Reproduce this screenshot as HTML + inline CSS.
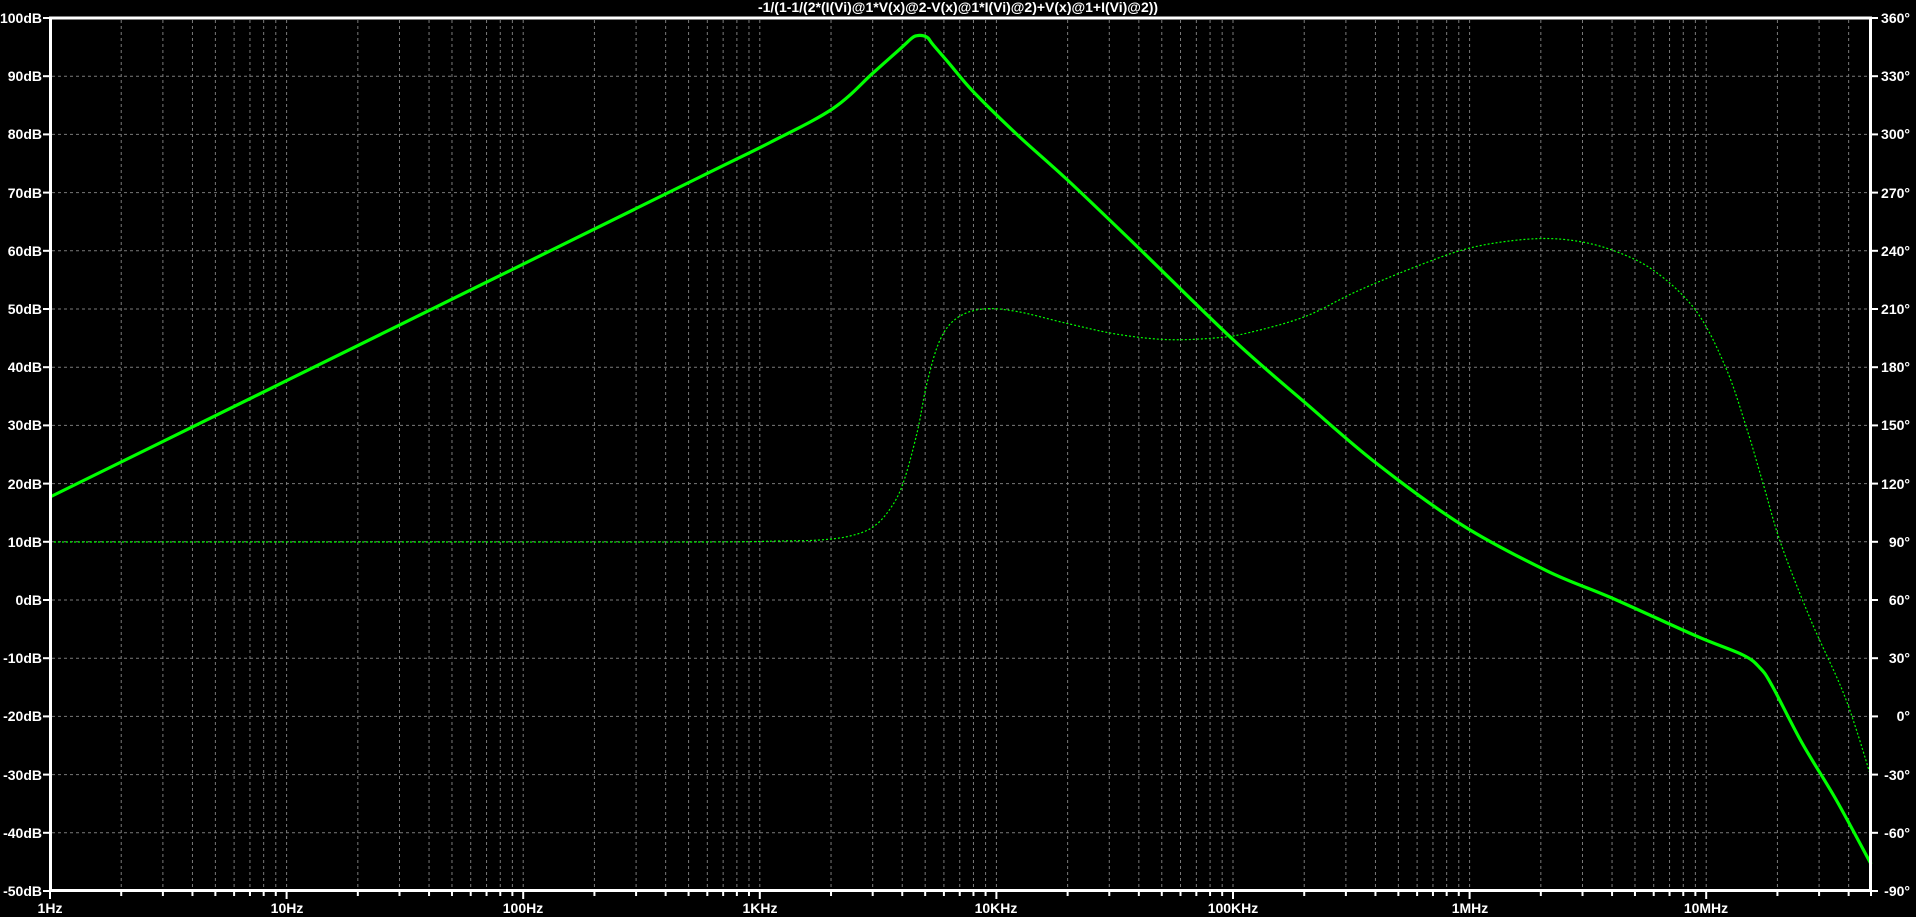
<!DOCTYPE html>
<html><head><meta charset="utf-8"><style>
html,body{margin:0;padding:0;background:#000;width:1916px;height:917px;overflow:hidden}
svg{display:block}
text{font-family:"Liberation Sans",sans-serif;font-size:14px;fill:#fff;font-weight:bold}
</style></head><body>
<svg id="s" width="1916" height="917" viewBox="0 0 1916 917">
<g id="grid" stroke="#7a7a7a" stroke-width="1" stroke-dasharray="3,3" fill="none"></g>
<g id="ticks" stroke="#fff" stroke-width="2" fill="none"></g>
<path id="ph" fill="none" stroke="#00ff00" stroke-width="1.2" stroke-dasharray="2,2" data-p="50,542 400,542 700,542 780,541 820,540 850,536 873,527 890,509 903,483.5 917,433 927,383 940,340 957,318 983,309 1017,311.5 1067,323.4 1117,334.2 1167,339.6 1217,337.8 1250,332.4 1305,316.6 1356,291.7 1420,265 1471,247.7 1526,239.3 1569,240 1611,249.7 1654,270.7 1696,310.8 1726,368.2 1747,429.4 1764,486.7 1781,544 1811,620.6 1845,697 1870,773.4"/>
<path id="mg" fill="none" stroke="#00ff00" stroke-width="3.2" stroke-linejoin="round" data-p="50,497 400,324.8 700,177 770,142.5 833,108.5 873,73 900,49 912,38 917,35.7 923,35.7 928,38 933,44.6 950,64.4 973,91.4 1017,134.5 1067,179.5 1133,242.5 1233,339.6 1305,402.6 1377,463.8 1462,525 1547,570.9 1611,597.6 1696,635.9 1743,655 1760,668 1772,685.5 1802,742.9 1836,799.5 1871,864"/>
<rect x="50.5" y="18" width="1820" height="872.5" fill="none" stroke="#fff" stroke-width="3"/>
<text x="958" y="12" text-anchor="middle" font-size="13">-1/(1-1/(2*(I(Vi)@1*V(x)@2-V(x)@1*I(Vi)@2)+V(x)@1+I(Vi)@2))</text>
<g text-anchor="end">
<text x="42" y="23">100dB</text><text x="42" y="81">90dB</text><text x="42" y="139">80dB</text><text x="42" y="198">70dB</text><text x="42" y="256">60dB</text><text x="42" y="314">50dB</text><text x="42" y="372">40dB</text><text x="42" y="430">30dB</text><text x="42" y="489">20dB</text><text x="42" y="547">10dB</text><text x="42" y="605">0dB</text><text x="42" y="663">-10dB</text><text x="42" y="721">-20dB</text><text x="42" y="780">-30dB</text><text x="42" y="838">-40dB</text><text x="42" y="896">-50dB</text>
<text x="1910" y="23">360°</text><text x="1910" y="81">330°</text><text x="1910" y="139">300°</text><text x="1910" y="198">270°</text><text x="1910" y="256">240°</text><text x="1910" y="314">210°</text><text x="1910" y="372">180°</text><text x="1910" y="430">150°</text><text x="1910" y="489">120°</text><text x="1910" y="547">90°</text><text x="1910" y="605">60°</text><text x="1910" y="663">30°</text><text x="1910" y="721">0°</text><text x="1910" y="780">-30°</text><text x="1910" y="838">-60°</text><text x="1910" y="896">-90°</text>
</g>
<g text-anchor="middle">
<text x="50" y="913">1Hz</text><text x="287" y="913">10Hz</text><text x="523" y="913">100Hz</text><text x="760" y="913">1KHz</text><text x="996" y="913">10KHz</text><text x="1233" y="913">100KHz</text><text x="1470" y="913">1MHz</text><text x="1706" y="913">10MHz</text>
</g>
</svg>
<script>
var g=document.getElementById('grid'),t=document.getElementById('ticks'),ns='http://www.w3.org/2000/svg';
function L(p,x1,y1,x2,y2){var l=document.createElementNS(ns,'line');l.setAttribute('x1',x1);l.setAttribute('y1',y1);l.setAttribute('x2',x2);l.setAttribute('y2',y2);p.appendChild(l);}
for(var k=1;k<15;k++){var y=18+k*58.2;L(g,52,y,1869,y);}
for(var k=0;k<=15;k++){var y=18+k*58.2;L(t,43,y,50,y);L(t,1871,y,1878,y);}
for(var d=0;d<8;d++)for(var m=1;m<10;m++){var x=50+236.6*(d+Math.log10(m));if(x>1871)break;if(!(d==0&&m==1))L(g,x,20,x,889);L(t,x,891,x,m==1?899:896);}
L(t,1871,891,1871,896);
['ph','mg'].forEach(function(id){var el=document.getElementById(id);var P=el.getAttribute('data-p').split(' ').map(function(s){return s.split(',').map(Number)});
var d='M'+P[0][0]+','+P[0][1];for(var i=0;i<P.length-1;i++){var p0=P[Math.max(i-1,0)],p1=P[i],p2=P[i+1],p3=P[Math.min(i+2,P.length-1)];
d+=' C'+(p1[0]+(p2[0]-p0[0])/6)+','+(p1[1]+(p2[1]-p0[1])/6)+' '+(p2[0]-(p3[0]-p1[0])/6)+','+(p2[1]-(p3[1]-p1[1])/6)+' '+p2[0]+','+p2[1];}
el.setAttribute('d',d);});
</script>
</body></html>
